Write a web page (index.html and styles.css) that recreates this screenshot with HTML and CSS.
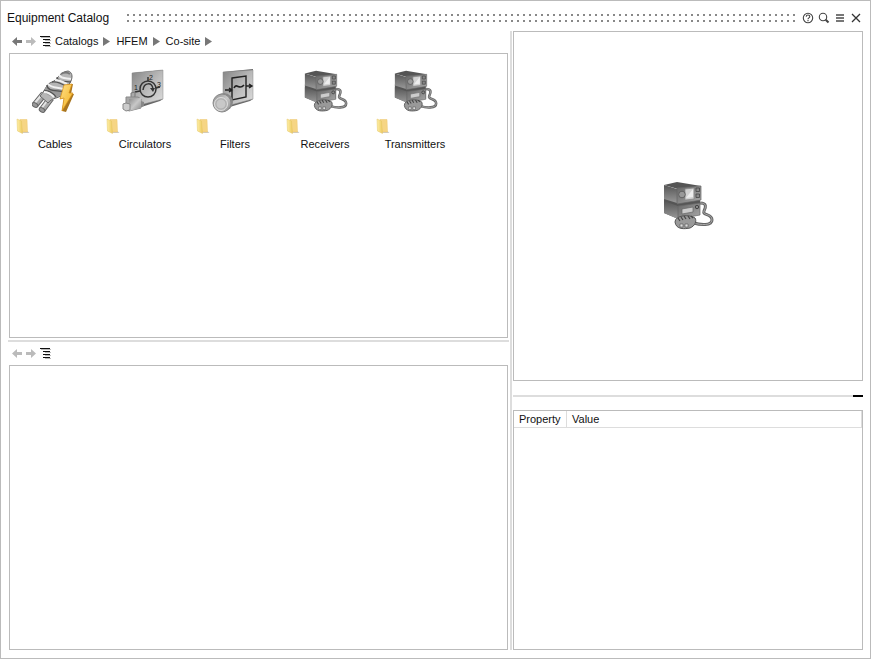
FILE: index.html
```
<!DOCTYPE html>
<html lang="en">
<head>
<meta charset="utf-8">
<title>Equipment Catalog</title>
<link rel="stylesheet" href="styles.css">
</head>
<body>
<svg class="defs" aria-hidden="true">
  <defs>
    <linearGradient id="metal" x1="0" y1="0" x2="1" y2="1"><stop offset="0" stop-color="#8a8a8a"/><stop offset=".5" stop-color="#c8c8c8"/><stop offset="1" stop-color="#888"/></linearGradient>
    <linearGradient id="plate" x1="0" y1="0" x2="1" y2="1"><stop offset="0" stop-color="#858585"/><stop offset=".55" stop-color="#bdbdbd"/><stop offset="1" stop-color="#e0e0e0"/></linearGradient>
    <linearGradient id="front" x1="0" y1="0" x2="1" y2="1"><stop offset="0" stop-color="#666"/><stop offset="1" stop-color="#aaa"/></linearGradient>
    <linearGradient id="side" x1="0" y1="0" x2="0" y2="1"><stop offset="0" stop-color="#555"/><stop offset="1" stop-color="#999"/></linearGradient>
    <linearGradient id="gold" x1="0" y1="0" x2="1" y2="1"><stop offset="0" stop-color="#ffe08a"/><stop offset="1" stop-color="#f2b01c"/></linearGradient>
    <linearGradient id="paper" x1="0" y1="0" x2="1" y2="0"><stop offset="0" stop-color="#fff0a8"/><stop offset="1" stop-color="#ecc95f"/></linearGradient>
    <symbol id="folder" viewBox="0 0 14 16">
      <path d="M6 13.500h6l1.500 1.500H6z" fill="#ccc"/>
      <path d="M4 1.500h7l.5 12.500H6z" fill="#f6d584" stroke="#ecc76e" stroke-width=".5"/>
      <path d="M1 1l4.500 2 1 12.500L1.500 13z" fill="url(#paper)" stroke="#e5c765" stroke-width=".5"/>
    </symbol>
    <symbol id="radio" viewBox="0 0 52 50">
      <path d="M38 22c7 0 6 4 4 8-2 5 8 2 8 9 0 6-12 5-18 3" fill="none" stroke="#666" stroke-width="3"/>
      <path d="M38 22c7 0 6 4 4 8-2 5 8 2 8 9 0 6-12 5-18 3" fill="none" stroke="#aaa" stroke-width="1"/>
      <path d="M2 17h36v16L14 37 2 32z" fill="#555"/>
      <path d="M2 20l14 5v13L2 32z" fill="url(#side)"/>
      <path d="M16 25l22-3v12l-22 4z" fill="url(#front)" stroke="#666" stroke-width=".7"/>
      <path d="M2 4L15 1l24 4-23 3z" fill="#555"/>
      <path d="M2 4l13 4v14L2 18z" fill="url(#side)"/>
      <path d="M15 7l24-2v14l-24 4z" fill="url(#front)" stroke="#666" stroke-width=".7"/>
      <path d="M23 8l9-1v11l-9 1z" fill="#d2d2d2" stroke="#888" stroke-width=".7"/>
      <path d="M24 17l7-9v8z" fill="#fff" opacity=".6"/>
      <circle cx="20" cy="13.500" r="3.300" fill="#999" stroke="#555" stroke-width=".8"/>
      <path d="M34 7h3.500v3.500H34zm0 6h3.500v3.500H34z" fill="#888" stroke="#444" stroke-width=".8"/>
      <path d="M20 28l11-2v5l-11 2z" fill="#ccc" stroke="#666" stroke-width=".7"/>
      <circle cx="35" cy="26" r="1.700" fill="#888" stroke="#444"/>
      <path d="M13 41c0-7 15-8 20-4 2 3 0 8-5 10-5 1-14 2-15-6z" fill="#999" stroke="#555"/>
      <path d="M16 37l2 3m1-4l2 3m1-4l2 3m2-3l2 3m1-3l2 2" stroke="#444" stroke-width="1.200"/>
      <path d="M18 43h3v3h-3zm5 0h3v3h-3z" fill="#ddd" stroke="#555" stroke-width=".6"/>
    </symbol>
    <symbol id="back" viewBox="0 0 10 9"><path d="M0 4.500L5 0v3h5v3H5v3z" fill="currentColor"/></symbol>
    <symbol id="next" viewBox="0 0 10 9"><path d="M10 4.500L5 0v3H0v3h5v3z" fill="currentColor"/></symbol>
    <symbol id="list" viewBox="0 0 11 11"><path d="M1 1.500h10M5 4.500h6M5 7.500h6M5 10.500h6" stroke="#bbb"/><path d="M0 .5h10M3 3.500h7M3 6.500h7M3 9.500h7" stroke="#111"/></symbol>
    <symbol id="arrow" viewBox="0 0 8 9"><path d="M0 0l7 4.500L0 9z" fill="#777"/></symbol>
  </defs>
</svg>
<main class="window">
  <header class="titlebar">
    <h1>Equipment Catalog</h1>
    <div class="grip"></div>
    <button aria-label="Help"><svg width="12" height="12" viewBox="0 0 12 12" fill="none" stroke="#444" stroke-width="1.100"><circle cx="6" cy="6" r="4.700"/><path d="M4.200 4.800c0-2.400 3.600-2.200 3.600-.2C7.800 6 6 5.800 6 7.200M6 8v1.200"/></svg></button>
    <button aria-label="Search"><svg width="12" height="12" viewBox="0 0 12 12" fill="none" stroke="#444" stroke-width="1.100"><circle cx="5" cy="5" r="3.700"/><path d="M7.700 7.700L10.500 10.500" stroke-width="2"/></svg></button>
    <button aria-label="Menu"><svg width="12" height="12" viewBox="0 0 12 12"><path d="M2 2h8v2H2zm0 3h8v2H2zm0 3h8v2H2z" fill="#777"/></svg></button>
    <button aria-label="Close"><svg width="12" height="12" viewBox="0 0 12 12"><path d="M2 2l8 8M10 2l-8 8" stroke="#333" stroke-width="1.300"/></svg></button>
  </header>
  <div class="body">
    <section class="left">
      <nav class="toolbar" aria-label="Catalog path">
        <button class="on" aria-label="Back"><svg width="10" height="9"><use href="#back"/></svg></button>
        <button aria-label="Forward"><svg width="10" height="9"><use href="#next"/></svg></button>
        <button aria-label="Tree"><svg width="11" height="11"><use href="#list"/></svg></button>
        <div class="crumbs">
          <a href="#catalogs">Catalogs</a><svg width="8" height="9"><use href="#arrow"/></svg>
          <a href="#hfem">HFEM</a><svg width="8" height="9"><use href="#arrow"/></svg>
          <a href="#cosite">Co-site</a><svg width="8" height="9"><use href="#arrow"/></svg>
        </div>
      </nav>
      <div class="pane">
        <div class="items">
        <a class="item" href="#cables">
          <svg class="art" viewBox="0 0 52 50">
            <g fill="none">
              <path d="M3 37L12 26M10 42l9-12" stroke="#666" stroke-width="7"/>
              <path d="M3 37L12 26M10 42l9-12" stroke="#a8a8a8" stroke-width="5"/>
              <path d="M2 36L11 25M9 41l9-12" stroke="#e4e4e4" stroke-width="2"/>
            </g>
            <path d="M8 28C15 20 14 16 20 14S27 4 36 3c4 1 5 5 3 10-3 4-4 12-10 15s-9 2-13 7z" fill="#b5b5b5" stroke="#666"/>
            <path d="M15 17c2 6 9 4 15 3 3-1 5-2 6-4-2 8-6 12-12 13-5 0-11-3-12-6z" fill="#999"/>
            <path d="M15 17c0 7 10 5 17 7M12 23c4-1 8 1 12 6M25 9c1 6 9 4 14 5M20 14c5-1 9 1 15 5" fill="none" stroke="#555" stroke-width="1.300"/>
            <path d="M16 16c3 4 9 3 16 5M12 24c4 0 7 2 10 5M27 7c2 4 7 3 12 4M23 12c5 0 8 2 12 4" fill="none" stroke="#f0f0f0" stroke-width="2"/>
            <path d="M29 6c3-2 6-2 9 0" fill="none" stroke="#777" stroke-width="2"/>
            <ellipse cx="3" cy="37" rx="3" ry="2" transform="rotate(30 3 37)" fill="#999" stroke="#666"/><ellipse cx="10" cy="42" rx="3" ry="2" transform="rotate(30 10 42)" fill="#999" stroke="#666"/>
            <path d="M33 17l8-1-2 10h3l-8 18-4-1 2-13-4 1z" fill="#a87520"/>
            <path d="M32 17l8-1-3 9h4L30 43l2-13-4 1z" fill="url(#gold)" stroke="#d58e14" stroke-width=".7"/>
          </svg>
          <svg class="folder"><use href="#folder"/></svg><span>Cables</span>
        </a>
        <a class="item" href="#circulators">
          <svg class="art" viewBox="0 0 52 50">
            <path d="M10 5l31-3v29l-3 2-28 9z" fill="#666"/><path d="M10 5l31-3v29l-31 8z" fill="url(#plate)" stroke="#888" stroke-width=".5"/>
            <circle cx="26" cy="21" r="8" fill="none" stroke="#333" stroke-width="1.500"/><path d="M21 22c1-8 9-8 10-1M13 24l5-1M26 13V9M34 20l4-1" fill="none" stroke="#333" stroke-width="1.500"/><path d="M28 20l5 0-2 4z" fill="#333"/>
            <text x="12" y="22" class="pin">1</text><text x="27" y="12" class="pin">2</text><text x="35" y="19" class="pin">3</text>
            <path d="M9 25l4-1v5l-4 1z" fill="#aaa" stroke="#777"/><path d="M4 29h12l3 2v9l-12 3-3-2z" fill="#a8a8a8" stroke="#888"/><path d="M7 31l12-1v10l-12 3z" fill="url(#metal)"/><path d="M1 36l3-1 4 1v6l-4 1-3-2z" fill="#ccc" stroke="#888"/><path d="M19 33l3 1v4l-3 1z" fill="#888"/>
          </svg>
          <svg class="folder"><use href="#folder"/></svg><span>Circulators</span>
        </a>
        <a class="item" href="#filters">
          <svg class="art" viewBox="0 0 52 50">
            <path d="M11 4l30-3v30l-3 2-27 8z" fill="#666"/><path d="M11 4l30-2v29l-30 8z" fill="url(#plate)" stroke="#888" stroke-width=".5"/>
            <path d="M20 10l14-2v21l-14 3zM13 22h7M34 18h6M17 20l3 2-3 2M37 16l3 2-3 2" fill="none" stroke="#222" stroke-width="1.400"/><path d="M22 20c3-6 5 3 10-3" fill="none" stroke="#222" stroke-width="1.600"/>
            <ellipse cx="12" cy="34" rx="9" ry="9" fill="#888"/><circle cx="10" cy="35" r="9" fill="url(#metal)" stroke="#888"/><circle cx="9" cy="36" r="6.500" fill="#bbb" stroke="#ddd"/><circle cx="9" cy="36" r="5" fill="#c8c8c8" stroke="#999" stroke-width=".5"/>
          </svg>
          <svg class="folder"><use href="#folder"/></svg><span>Filters</span>
        </a>
        <a class="item" href="#receivers"><svg class="art radio"><use href="#radio"/></svg><svg class="folder"><use href="#folder"/></svg><span>Receivers</span></a>
        <a class="item" href="#transmitters"><svg class="art radio"><use href="#radio"/></svg><svg class="folder"><use href="#folder"/></svg><span>Transmitters</span></a>
        </div>
      </div>
      <div class="split"></div>
      <nav class="toolbar" aria-label="Selection path">
        <button aria-label="Back"><svg width="10" height="9"><use href="#back"/></svg></button>
        <button aria-label="Forward"><svg width="10" height="9"><use href="#next"/></svg></button>
        <button aria-label="Tree"><svg width="11" height="11"><use href="#list"/></svg></button>
      </nav>
      <div class="pane"></div>
    </section>
    <div class="divider"></div>
    <section class="right">
      <div class="preview"><svg width="52" height="50"><use href="#radio"/></svg></div>
      <div class="collapse"><button aria-label="Collapse"></button></div>
      <div class="properties">
        <table><thead><tr><th class="name">Property</th><th>Value</th></tr></thead></table>
      </div>
    </section>
  </div>
</main>
</body>
</html>
```

FILE: styles.css
```
* { box-sizing: border-box; }
body { margin: 0; font: 11px/16px "Liberation Sans", Arial, sans-serif; color: #111; background: #fff; }
svg { display: block; }
button { border: 0; padding: 0; background: none; color: #bbb; }
a { color: inherit; text-decoration: none; }
.defs { position: absolute; width: 0; height: 0; }
.window { height: 100vh; display: flex; flex-direction: column; border: 1px solid #bbb; padding: 0 7px 8px; }
.titlebar { height: 29px; flex: none; display: flex; align-items: center; gap: 4px; padding: 5px 1px 0 0; margin-left: -1px; }
h1 { margin: 0; font-size: 12px; font-weight: 400; min-width: 106px; }
.grip { flex: 1; height: 8px; margin: 0 0 0 10px; background: linear-gradient(#fff, #fff) 0 2px / 100% 4px no-repeat, repeating-linear-gradient(90deg, #888 0 2px, #fff 2px 6px); }
.body { flex: 1; min-height: 0; display: flex; }
.left { flex: 501 1 0; min-width: 0; display: flex; flex-direction: column; }
.toolbar { height: 23px; flex: none; display: flex; align-items: center; gap: 4px; padding: 0 4px 1px; }
.toolbar .on { color: #777; }
.crumbs { display: flex; align-items: center; gap: 5px; }
.pane { flex: 1 1 0; min-height: 0; border: 1px solid #bbb; margin: 0 1px; }
.items { display: flex; flex-wrap: wrap; padding-top: 14px; }
.split { height: 2px; margin-top: 2px; background: #ddd; flex: none; }
.item { width: 90px; display: grid; grid-template-columns: 22px 1fr; grid-template-rows: 50px 18px 20px; }
.art { grid-column: 2; grid-row: 1; width: 52px; height: 50px; }
.item .radio { width: 45px; height: 43px; margin: 2px 0 0 1px; }
.folder { grid-column: 1; grid-row: 2; width: 14px; height: 16px; margin-left: 6px; }
.item span { grid-column: 1 / 3; grid-row: 3; text-align: center; }
.pin { font: 7px "Liberation Sans", sans-serif; fill: #222; }
.divider { width: 2px; margin: 1px 1px 0; background: #ddd; }
.right { flex: 350 1 0; min-width: 0; margin-top: 1px; display: flex; flex-direction: column; }
.preview { aspect-ratio: 1; border: 1px solid #bbb; display: flex; align-items: center; justify-content: center; }
.collapse { height: 29px; position: relative; display: flex; align-items: center; }
.collapse::before { content: ""; flex: 1; height: 2px; background: #ddd; }
.collapse button { position: absolute; right: 0; top: 14px; width: 10px; height: 2px; background: #000; }
.properties { flex: 1; min-height: 0; border: 1px solid #bbb; }
table { width: 100%; border-collapse: separate; border-spacing: 0; table-layout: fixed; }
th { height: 17px; padding: 0 5px; line-height: 16px; font-weight: 400; text-align: left; border: solid #ddd; border-width: 0 1px 1px 0; }
.name { width: 53px; }
```
